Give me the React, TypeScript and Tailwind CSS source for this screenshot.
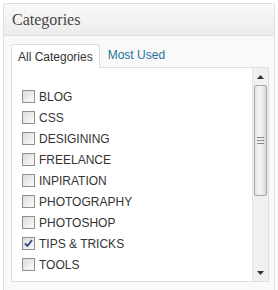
import React from 'react';

const CATEGORIES = [
  { name: 'BLOG', checked: false },
  { name: 'CSS', checked: false },
  { name: 'DESIGINING', checked: false },
  { name: 'FREELANCE', checked: false },
  { name: 'INPIRATION', checked: false },
  { name: 'PHOTOGRAPHY', checked: false },
  { name: 'PHOTOSHOP', checked: false },
  { name: 'TIPS & TRICKS', checked: true },
  { name: 'TOOLS', checked: false },
];

function Box({ checked }: { checked: boolean }) {
  return (
    <span className="w-[13px] h-[13px] border border-[#8f8f8f] bg-gradient-to-br from-[#dcdcdc] to-[#fbfbfb] flex items-center justify-center shrink-0">
      {checked && (
        <svg width="9" height="9" viewBox="0 0 9 9">
          <path d="M1 4.5 L3.5 7 L8 1" fill="none" stroke="#2a4a8c" strokeWidth="1.8" />
        </svg>
      )}
    </span>
  );
}

export default function App() {
  return (
    <div className="w-[278px] h-[290px] bg-white pt-[3px] pl-[3px] font-['Liberation_Sans',Arial,sans-serif]">
      <div className="w-[272px] h-[287px] border-t border-l border-r border-[#dfdfdf] bg-[#f9f9f9] rounded-t-[3px] flex flex-col">
        {/* Header */}
        <div className="h-[32px] bg-gradient-to-b from-[#f9f9f9] to-[#ececec] border-b border-[#dfdfdf] flex items-center pl-[8px]">
          <span className="font-['Liberation_Serif',Georgia,serif] text-[16px] text-[#464646] pt-[1px]">Categories</span>
        </div>

        {/* Tabs */}
        <div className="flex items-end pl-[7px] pt-[7px] h-[31px]">
          <div className="h-[24px] px-[6px] bg-white border border-b-0 border-[#dfdfdf] rounded-t-[3px] text-[12px] text-[#333] flex items-center -mb-px relative z-10">
            All Categories
          </div>
          <div className="h-[24px] px-[8px] text-[12px] text-[#21759b] flex items-center">Most Used</div>
        </div>

        {/* List box */}
        <div className="ml-[7px] w-[258px] h-[215px] bg-white border border-[#dfdfdf] flex">
          <div className="flex-1 flex flex-col pl-[10px] pt-[22px] gap-[8px]">
            {CATEGORIES.map(c => (
              <label key={c.name} className="flex items-center gap-[4px] h-[13px] text-[12px] text-[#333]">
                <Box checked={c.checked} />
                <span>{c.name}</span>
              </label>
            ))}
          </div>
          {/* Scrollbar */}
          <div className="w-[16px] bg-[#f0f0f0] border-l border-[#e6e6e6] flex flex-col">
            <div className="h-[17px] flex items-center justify-center">
              <svg width="7" height="4" viewBox="0 0 7 4"><path d="M0 4 L3.5 0 L7 4 Z" fill="#333" /></svg>
            </div>
            <div className="h-[111px] mx-[1px] rounded-[2px] border border-[#a9a9a9] bg-gradient-to-r from-[#e6e6e6] via-[#f4f4f4] to-[#d9d9d9] flex items-center justify-center">
              <svg width="7" height="7" viewBox="0 0 7 7">
                <path d="M0 0.5 H7 M0 3.5 H7 M0 6.5 H7" stroke="#888" strokeWidth="1" />
              </svg>
            </div>
            <div className="flex-1" />
            <div className="h-[17px] flex items-center justify-center">
              <svg width="7" height="4" viewBox="0 0 7 4"><path d="M0 0 L3.5 4 L7 0 Z" fill="#333" /></svg>
            </div>
          </div>
        </div>
      </div>
    </div>
  );
}
